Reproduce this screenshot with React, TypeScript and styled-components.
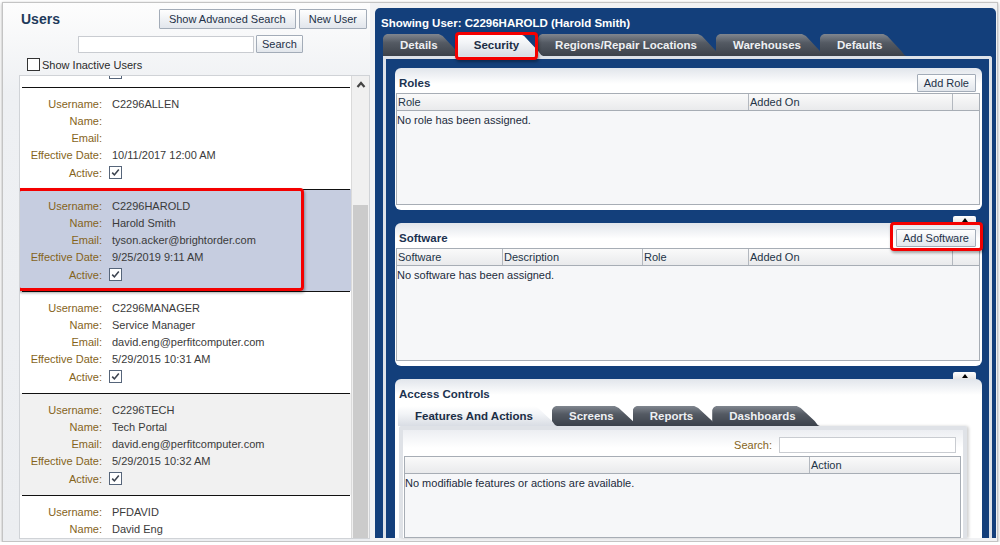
import React from 'react'
import styled, { createGlobalStyle } from 'styled-components'

const Global = createGlobalStyle`
  html, body { margin: 0; padding: 0; background: #fff; }
  body {
    font-family: "Liberation Sans", Arial, sans-serif;
    font-size: 11px;
    color: #2b2b2b;
  }
  * { box-sizing: border-box; }
`

const NAVY = '#133f7b'

const Frame = styled.div`
  width: 996px;
  height: 540px;
  margin: 2px 0 0 2px;
  border: 1px solid #c4c4c4;
  box-shadow: 0 1px 3px rgba(0, 0, 0, 0.35);
  background: #f1f2f4;
  display: flex;
  overflow: hidden;
`

/* ---------- left: users list ---------- */

const LeftPanel = styled.div`
  width: 367px;
  display: flex;
  flex-direction: column;
  padding: 6px 0 2px 16px;
  background: linear-gradient(#fdfdfd, #eef0f3 90px, #eceef1);
`

const Header = styled.div`
  display: flex;
  justify-content: space-between;
  align-items: center;
  height: 20px;
  padding: 0 3px 0 2px;
`

const Title = styled.h1`
  margin: 0;
  font-size: 14px;
  font-weight: bold;
  color: #213a5b;
`

const ButtonGroup = styled.div`
  display: flex;
  gap: 3px;
`

const Button = styled.button<{ $h?: number; $pad?: number }>`
  height: ${p => p.$h ?? 18}px;
  padding: 0 ${p => p.$pad ?? 6}px;
  font-family: inherit;
  font-size: 11px;
  color: #1e3148;
  background: linear-gradient(#fefefe, #e2e6ec);
  border: 1px solid #a3acb8;
  border-radius: 1px;
  white-space: nowrap;
`

const SearchRow = styled.div`
  display: flex;
  align-items: center;
  gap: 2px;
  margin-top: 6px;
  padding-left: 59px;
`

const TextInput = styled.input<{ $w: number; $h: number }>`
  width: ${p => p.$w}px;
  height: ${p => p.$h}px;
  border: 1px solid #c9ccd1;
  background: #fff;
  padding: 0 2px;
  font-family: inherit;
  font-size: 11px;
`

const CheckRow = styled.label`
  display: flex;
  align-items: center;
  gap: 2px;
  margin-top: 5px;
  padding-left: 8px;
  color: #2a2a2a;
`

const Box = styled.span<{ $dark?: boolean }>`
  flex: none;
  display: inline-flex;
  align-items: center;
  justify-content: center;
  width: 13px;
  height: 13px;
  border: 1px solid ${p => (p.$dark ? '#333' : '#56657a')};
  background: #fff;
`

const ListBox = styled.div`
  flex: 1;
  min-height: 0;
  margin-top: 4px;
  border: 1px solid #d0d3d7;
  background: #fff;
  display: flex;
  overflow: hidden;
`

const Items = styled.div`
  flex: 1;
  display: flex;
  flex-direction: column;
`

const Stub = styled.div`
  flex: none;
  display: flex;
  align-items: flex-start;
  height: 11px;
  overflow: hidden;
  padding-left: 89px;
  & > span { margin-top: -10px; }
`

const Item = styled.div<{ $bg: string }>`
  position: relative;
  flex: none;
  height: 102px;
  padding: 0 1px 0 2px;
  background: ${p => p.$bg};
`

const Rule = styled.div`
  height: 1px;
  background: #111;
`

const Fields = styled.div`
  display: grid;
  grid-template-columns: 80px 1fr;
  grid-template-rows: repeat(4, 17px) 19px;
  column-gap: 10px;
  align-items: center;
  padding-top: 7px;
`

const Label = styled.div`
  text-align: right;
  color: #85641b;
`

const Value = styled.div`
  color: #3a3a3a;
  white-space: nowrap;
  & > span { margin-left: -3px; }
`

const ScrollBar = styled.div`
  width: 18px;
  flex: none;
  display: flex;
  flex-direction: column;
  align-items: center;
  padding-top: 5px;
  border-left: 1px solid #dadada;
  background: #f0f0f0;
`

const Thumb = styled.div`
  width: 15px;
  flex: 1;
  margin-top: 117px;
  background: #cbcbcb;
`

const Highlight = styled.div<{ $l: number; $t: number; $w: number; $h: number }>`
  position: absolute;
  left: ${p => p.$l}px;
  top: ${p => p.$t}px;
  width: ${p => p.$w}px;
  height: ${p => p.$h}px;
  border: 3px solid #f40000;
  border-radius: 4px;
  box-shadow: 1px 2px 3px rgba(0, 0, 0, 0.35);
  z-index: 5;
  pointer-events: none;
`

/* ---------- right: user detail ---------- */

const RightPanel = styled.div`
  flex: 1;
  margin: 5px 1px 3px 5px;
  background: ${NAVY};
  border-radius: 5px 5px 0 0;
  display: flex;
  flex-direction: column;
  padding-top: 8px;
  min-width: 0;
`

const Showing = styled.div`
  height: 14px;
  line-height: 14px;
  padding-left: 6px;
  color: #fff;
  font-weight: bold;
  font-size: 11.5px;
`

const TabStrip = styled.div<{ $h: number }>`
  display: flex;
  height: ${p => p.$h}px;
  flex: none;
`

const MainStrip = styled(TabStrip)`
  margin: 4px 0 0 8px;
`

const Tab = styled.div<{ $active?: boolean; $h: number }>`
  position: relative;
  isolation: isolate;
  z-index: ${p => (p.$active ? 2 : 1)};
  height: ${p => p.$h}px;
  line-height: ${p => p.$h + 1}px;
  padding: 0 24px 0 17px;
  margin-left: -5px;
  font-weight: bold;
  font-size: 11.5px;
  white-space: nowrap;
  color: ${p => (p.$active ? '#1b2d45' : '#eef0f3')};
  &:first-child { margin-left: 0; }
  &::before {
    content: '';
    position: absolute;
    inset: 0;
    z-index: -1;
    clip-path: polygon(0 4px, 1px 2px, 2px 1px, 4px 0, calc(100% - 23px) 0, calc(100% - 19px) 2px,
      calc(100% - 5px) calc(100% - 5px), calc(100% - 2px) calc(100% - 1px), 100% 100%, 0 100%);
    background: ${p =>
      p.$active
        ? 'linear-gradient(#ffffff, #f2f4f7 40%, #d9dde4)'
        : 'linear-gradient(#80868f, #545a63 40%, #3c424b)'};
  }
`

const TabBody = styled.div`
  flex: 1;
  min-height: 0;
  margin: 0 4px 0 8px;
  border: 3px solid #dde2e9;
  border-bottom: 0;
  border-radius: 0 3px 0 0;
  background: ${NAVY};
  padding: 9px 7px 0 9px;
  display: flex;
  flex-direction: column;
`

const Panel = styled.section<{ $h?: number }>`
  display: flex;
  flex-direction: column;
  height: ${p => (p.$h ? `${p.$h}px` : 'auto')};
  flex: ${p => (p.$h ? 'none' : 1)};
  min-height: 0;
  padding: 5px 2px ${p => (p.$h ? 5 : 0)}px 1px;
  border-radius: ${p => (p.$h ? '6px' : '6px 6px 0 0')};
  background: linear-gradient(#e1e5eb, #ffffff 16px);
`

const PanelHead = styled.div`
  flex: none;
  display: flex;
  justify-content: space-between;
  align-items: center;
  height: 19px;
  margin-bottom: 1px;
  padding: 0 4px 0 3px;
`

const PanelTitle = styled.h2`
  margin: 0;
  font-size: 11.5px;
  font-weight: bold;
  color: #1c3250;
`

const Anchor = styled.span`
  position: relative;
  display: inline-flex;
`

const Collapse = styled.div`
  flex: none;
  height: 13px;
  display: flex;
  justify-content: flex-end;
  align-items: flex-end;
  padding-right: 6px;
`

const CollapseTab = styled.div`
  width: 23px;
  height: 7px;
  border-radius: 2px 2px 0 0;
  background: linear-gradient(#ffffff, #e6e6e6);
  display: flex;
  justify-content: center;
  align-items: center;
  &::after {
    content: '';
    border-left: 3px solid transparent;
    border-right: 3px solid transparent;
    border-bottom: 4px solid #000;
  }
`

const Table = styled.div`
  flex: 1;
  min-height: 0;
  display: flex;
  flex-direction: column;
  border: 1px solid #a7adb5;
  background: #f6f7f9;
`

const HeadRow = styled.div<{ $cols: string }>`
  flex: none;
  display: grid;
  grid-template-columns: ${p => p.$cols};
  height: 17px;
  border-bottom: 1px solid #a7adb5;
  background: linear-gradient(#fafafa, #e9eaec);
`

const HeadCell = styled.div`
  padding-left: 1px;
  line-height: 16px;
  color: #233447;
  border-right: 1px solid #b3b8bf;
  &:last-child { border-right: 0; }
`

const EmptyText = styled.div`
  padding-top: 2px;
  line-height: 14px;
  color: #1c2b3c;
`

const SubStrip = styled(TabStrip)`
  margin: 2px 0 0 2px;
`

const SubBody = styled.div`
  flex: 1;
  min-height: 0;
  margin: 0 13px 0 3px;
  border: 4px solid #dfe2e7;
  border-bottom: 0;
  border-radius: 3px 3px 0 0;
  box-shadow: 2px 0 3px rgba(0, 0, 0, 0.18);
  background: linear-gradient(#eceef2, #ffffff 18px);
  padding: 6px 2px 0 1px;
  display: flex;
  flex-direction: column;
`

const FilterRow = styled.div`
  flex: none;
  display: flex;
  justify-content: flex-end;
  align-items: center;
  gap: 7px;
  height: 17px;
  margin-bottom: 3px;
  padding-right: 5px;
  color: #85641b;
`

const Tick = () => (
  <svg width="9" height="9" viewBox="0 0 9 9">
    <path d="M1.2 4.6 L3.4 6.9 L7.8 1.6" fill="none" stroke="#3d4450" strokeWidth="1.6" />
  </svg>
)

const Check = ({ on = true }: { on?: boolean }) => <Box>{on && <Tick />}</Box>

type User = {
  username: string
  name: string
  email?: string
  date?: string
  bg: string
  marked?: boolean
}

const users: User[] = [
  { username: 'C2296ALLEN', name: '', email: '', date: '10/11/2017 12:00 AM', bg: '#ffffff' },
  {
    username: 'C2296HAROLD',
    name: 'Harold Smith',
    email: 'tyson.acker@brightorder.com',
    date: '9/25/2019 9:11 AM',
    bg: '#c6cde0',
    marked: true,
  },
  {
    username: 'C2296MANAGER',
    name: 'Service Manager',
    email: 'david.eng@perfitcomputer.com',
    date: '5/29/2015 10:31 AM',
    bg: '#ffffff',
  },
  {
    username: 'C2296TECH',
    name: 'Tech Portal',
    email: 'david.eng@perfitcomputer.com',
    date: '5/29/2015 10:32 AM',
    bg: '#f1f1f1',
  },
  // last row is scrolled half out of view: only its first two fields show
  { username: 'PFDAVID', name: 'David Eng', bg: '#ffffff' },
]

const UserItem = ({ u }: { u: User }) => (
  <Item $bg={u.bg}>
    <Rule />
    <Fields>
      <Label>Username:</Label>
      <Value>{u.username}</Value>
      <Label>Name:</Label>
      <Value>{u.name}</Value>
      {u.date !== undefined && (
        <>
          <Label>Email:</Label>
          <Value>{u.email}</Value>
          <Label>Effective Date:</Label>
          <Value>{u.date}</Value>
          <Label>Active:</Label>
          <Value><Check /></Value>
        </>
      )}
    </Fields>
    {u.marked && <Highlight $l={-3} $t={-1} $w={287} $h={103} />}
  </Item>
)

const mainTabs = ['Details', 'Security', 'Regions/Repair Locations', 'Warehouses', 'Defaults']
const accessTabs = ['Features And Actions', 'Screens', 'Reports', 'Dashboards']

export default function App() {
  return (
    <>
      <Global />
      <Frame>
        <LeftPanel>
          <Header>
            <Title>Users</Title>
            <ButtonGroup>
              <Button $h={20} $pad={9}>Show Advanced Search</Button>
              <Button $h={20} $pad={9}>New User</Button>
            </ButtonGroup>
          </Header>
          <SearchRow>
            <TextInput $w={176} $h={17} />
            <Button $h={18} $pad={5}>Search</Button>
          </SearchRow>
          <CheckRow>
            <Box $dark />
            Show Inactive Users
          </CheckRow>
          <ListBox>
            <Items>
              <Stub><Check /></Stub>
              {users.map(u => <UserItem key={u.username} u={u} />)}
            </Items>
            <ScrollBar>
              <svg width="10" height="7" viewBox="0 0 10 7">
                <path d="M1.5 6 L5 2 L8.5 6" fill="none" stroke="#444" strokeWidth="2.2" />
              </svg>
              <Thumb />
            </ScrollBar>
          </ListBox>
        </LeftPanel>

        <RightPanel>
          <Showing>Showing User: C2296HAROLD (Harold Smith)</Showing>
          <MainStrip $h={22}>
            {mainTabs.map(t => (
              <Tab key={t} $h={22} $active={t === 'Security'}>
                {t}
                {t === 'Security' && <Highlight $l={-2} $t={-2} $w={83} $h={28} />}
              </Tab>
            ))}
          </MainStrip>
          <TabBody>
            <Panel $h={142}>
              <PanelHead>
                <PanelTitle>Roles</PanelTitle>
                <Button>Add Role</Button>
              </PanelHead>
              <Table>
                <HeadRow $cols="352px 204px 1fr">
                  <HeadCell>Role</HeadCell>
                  <HeadCell>Added On</HeadCell>
                  <HeadCell />
                </HeadRow>
                <EmptyText>No role has been assigned.</EmptyText>
              </Table>
            </Panel>
            <Collapse><CollapseTab /></Collapse>
            <Panel $h={143}>
              <PanelHead>
                <PanelTitle>Software</PanelTitle>
                <Anchor>
                  <Button>Add Software</Button>
                  <Highlight $l={-6} $t={-7} $w={93} $h={29} />
                </Anchor>
              </PanelHead>
              <Table>
                <HeadRow $cols="106px 140px 106px 204px 1fr">
                  <HeadCell>Software</HeadCell>
                  <HeadCell>Description</HeadCell>
                  <HeadCell>Role</HeadCell>
                  <HeadCell>Added On</HeadCell>
                  <HeadCell />
                </HeadRow>
                <EmptyText>No software has been assigned.</EmptyText>
              </Table>
            </Panel>
            <Collapse><CollapseTab /></Collapse>
            <Panel>
              <PanelHead>
                <PanelTitle>Access Controls</PanelTitle>
              </PanelHead>
              <SubStrip $h={20}>
                {accessTabs.map(t => (
                  <Tab key={t} $h={20} $active={t === 'Features And Actions'}>{t}</Tab>
                ))}
              </SubStrip>
              <SubBody>
                <FilterRow>
                  Search:
                  <TextInput $w={177} $h={16} />
                </FilterRow>
                <Table>
                  <HeadRow $cols="405px 1fr">
                    <HeadCell />
                    <HeadCell>Action</HeadCell>
                  </HeadRow>
                  <EmptyText>No modifiable features or actions are available.</EmptyText>
                </Table>
              </SubBody>
            </Panel>
          </TabBody>
        </RightPanel>
      </Frame>
    </>
  )
}
